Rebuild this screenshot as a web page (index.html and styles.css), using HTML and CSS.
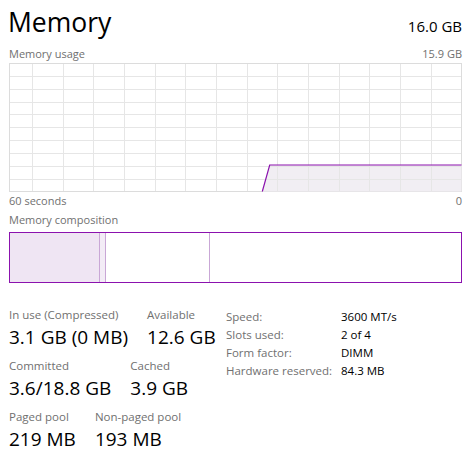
FILE: index.html
```html
<!DOCTYPE html>
<html>
<head>
<meta charset="utf-8">
<link rel="stylesheet" href="styles.css">
</head>
<body>
<div class="page">
  <div class="head">
    <div class="title">Memory</div>
    <div class="total">16.0 GB</div>
  </div>
  <div class="sub">
    <span>Memory usage</span>
    <span>15.9 GB</span>
  </div>
  <svg class="graph" width="453" height="129" viewBox="0 0 453 129">
    <rect x="0.5" y="0.5" width="452" height="128" fill="#fff" stroke="#dcdcdc"/>
    <polygon points="253.3,128.5 260.7,102 452.5,102 452.5,128.5" fill="#f1eef3"/>
    <g stroke="#e6e6e6" stroke-width="1">
      <line x1="23.5" y1="1" x2="23.5" y2="128"/>
      <line x1="54.5" y1="1" x2="54.5" y2="128"/>
      <line x1="84.5" y1="1" x2="84.5" y2="128"/>
      <line x1="115.5" y1="1" x2="115.5" y2="128"/>
      <line x1="146.5" y1="1" x2="146.5" y2="128"/>
      <line x1="176.5" y1="1" x2="176.5" y2="128"/>
      <line x1="207.5" y1="1" x2="207.5" y2="128"/>
      <line x1="238.5" y1="1" x2="238.5" y2="128"/>
      <line x1="268.5" y1="1" x2="268.5" y2="128"/>
      <line x1="299.5" y1="1" x2="299.5" y2="128"/>
      <line x1="330.5" y1="1" x2="330.5" y2="128"/>
      <line x1="360.5" y1="1" x2="360.5" y2="128"/>
      <line x1="391.5" y1="1" x2="391.5" y2="128"/>
      <line x1="422.5" y1="1" x2="422.5" y2="128"/>
      <line x1="1" y1="13.5" x2="452" y2="13.5"/>
      <line x1="1" y1="26.5" x2="452" y2="26.5"/>
      <line x1="1" y1="39.5" x2="452" y2="39.5"/>
      <line x1="1" y1="51.5" x2="452" y2="51.5"/>
      <line x1="1" y1="64.5" x2="452" y2="64.5"/>
      <line x1="1" y1="77.5" x2="452" y2="77.5"/>
      <line x1="1" y1="90.5" x2="452" y2="90.5"/>
      <line x1="1" y1="103.5" x2="452" y2="103.5"/>
      <line x1="1" y1="116.5" x2="452" y2="116.5"/>
    </g>
    <polyline points="253.3,128.5 260.7,102 452.5,102" fill="none" stroke="#8b12ae" stroke-width="1.2"/>
  </svg>
  <div class="axis">
    <span>60 seconds</span>
    <span>0</span>
  </div>
  <div class="sub comp-label">Memory composition</div>
  <div class="comp">
    <div class="seg inuse" style="width:90px"></div>
    <div class="seg modified" style="width:6px"></div>
    <div class="seg standby" style="width:104px"></div>
    <div class="seg free"></div>
  </div>
  <div class="stats">
    <div class="left">
      <div class="row">
        <div class="item"><div class="label">In use (Compressed)</div><div class="value">3.1 GB (0 MB)</div></div>
        <div class="item"><div class="label">Available</div><div class="value">12.6 GB</div></div>
      </div>
      <div class="row">
        <div class="item"><div class="label">Committed</div><div class="value">3.6/18.8 GB</div></div>
        <div class="item"><div class="label">Cached</div><div class="value">3.9 GB</div></div>
      </div>
      <div class="row">
        <div class="item"><div class="label">Paged pool</div><div class="value">219 MB</div></div>
        <div class="item"><div class="label">Non-paged pool</div><div class="value">193 MB</div></div>
      </div>
    </div>
    <div class="right">
      <div class="k">Speed:</div><div class="v">3600 MT/s</div>
      <div class="k">Slots used:</div><div class="v">2 of 4</div>
      <div class="k">Form factor:</div><div class="v">DIMM</div>
      <div class="k">Hardware reserved:</div><div class="v">84.3 MB</div>
    </div>
  </div>
</div>
</body>
</html>
```

FILE: styles.css
```css
html, body {
  margin: 0;
  padding: 0;
  background: #ffffff;
}
.page {
  padding: 0 12px 0 9px;
  font-family: "Open Sans", "Noto Sans", sans-serif;
  color: #000;
  width: 453px;
}
.head {
  display: flex;
  justify-content: space-between;
  align-items: baseline;
  height: 44px;
}
.title {
  font-size: 26.5px;
  line-height: 44px;
  margin-left: -1px;
}
.total {
  font-size: 15px;
}
.sub {
  display: flex;
  justify-content: space-between;
  font-size: 11px;
  line-height: 19px;
  color: #707070;
}
.graph {
  display: block;
}
.axis {
  display: flex;
  justify-content: space-between;
  font-size: 11px;
  line-height: 18px;
  color: #707070;
}
.comp-label {
  line-height: 20px;
}
.comp {
  display: flex;
  height: 49px;
  border: 1px solid #8b12ae;
  margin-top: 2px;
}
.seg {
  height: 100%;
  box-sizing: border-box;
}
.inuse {
  background: #efe5f3;
  border-right: 1px solid #c9a7d6;
}
.modified {
  background: #f3ecf6;
  border-right: 1px solid #c9a7d6;
}
.standby {
  background: #ffffff;
  border-right: 1px solid #c9a7d6;
}
.free {
  flex: 1;
}
.stats {
  display: flex;
  margin-top: 24px;
}
.left {
  width: 217px;
}
.row {
  display: flex;
  gap: 19px;
  margin-bottom: 6px;
}
.label {
  font-size: 11.5px;
  line-height: 16px;
  color: #707070;
}
.value {
  font-size: 19px;
  line-height: 29px;
}
.right {
  display: grid;
  grid-template-columns: 115px auto;
  grid-auto-rows: 18px;
  font-size: 11.5px;
  line-height: 18px;
  margin-top: 1px;
}
.k {
  color: #707070;
}
.v {
  color: #000;
}
```
